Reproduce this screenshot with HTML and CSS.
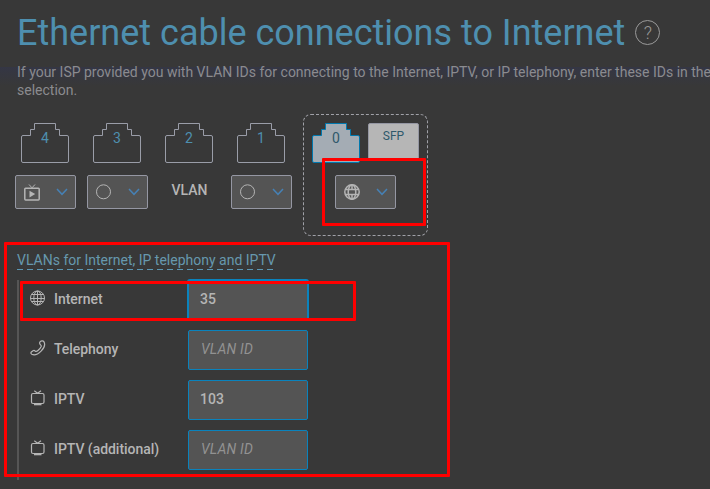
FILE: index.html
```html
<!DOCTYPE html>
<html lang="en">
<head>
    <meta charset="UTF-8">
    <meta name="viewport" content="width=device-width, initial-scale=1.0">
    <title>Ethernet cable connections to Internet</title>

    <link rel="stylesheet" href="styles.css">
</head>
<body>
    <!-- shared icons -->
    <svg class="icon_defs">
        <symbol id="icon_port" viewBox="0 0 48 40">
            <path d="M2 12.5H9.5V6.5H13.5V.5H34.5V6.5H38.5V12.5H46A1.5 1.5 0 0 1 47.5 14V38A1.5 1.5 0 0 1 46 39.5H2A1.5 1.5 0 0 1 .5 38V14A1.5 1.5 0 0 1 2 12.5Z"/>
        </symbol>
        <symbol id="icon_arrow" viewBox="0 0 12 8">
            <path d="M1 1L6 6.3L11 1"/>
        </symbol>
        <symbol id="icon_globe" viewBox="0 0 16 16">
            <circle cx="7.5" cy="8" r="7"/>
            <ellipse cx="7.5" cy="8" rx="3.7" ry="7"/>
            <path d="M7.5 1V15M.5 8.5H14.5M1.8 4.5H13.2M1.8 11.5H13.2"/>
        </symbol>
        <symbol id="icon_tv" viewBox="0 0 16 16">
            <rect x="1.5" y="3.5" width="12.5" height="10" rx="1.5" stroke-width="1.2"/>
            <path d="M4.3 .8L7.6 3.2L11 .8" stroke-width="1.2"/>
            <path d="M4 14.5H11.5" stroke-width="1.6"/>
        </symbol>
    </svg>

    <h1 class="title_page">Ethernet cable connections to Internet
        <span class="btn_help">?</span>
    </h1>
    <p class="text_info">If your ISP provided you with VLAN IDs for connecting to the Internet, IPTV, or IP telephony, enter these IDs in the<br>selection.</p>

    <div class="section_ports">
        <div class="item_port">
            <div class="port"><svg><use href="#icon_port"/></svg><span>4</span></div>
            <div class="select_port">
                <svg class="icon_type" viewBox="0 0 16 17">
                    <rect x=".8" y="4.3" width="14.4" height="11.6" rx=".8" stroke-width="1.5"/>
                    <path d="M5 .5L8 3.8L11 .5"/>
                    <path class="icon_fill" d="M5.5 6.8L11.2 10.1L5.5 13.4Z"/>
                </svg>
                <svg class="icon_arrow"><use href="#icon_arrow"/></svg>
            </div>
        </div>
        <div class="item_port">
            <div class="port"><svg><use href="#icon_port"/></svg><span>3</span></div>
            <div class="select_port">
                <svg class="icon_type" viewBox="0 0 16 17"><circle cx="7.5" cy="7.8" r="7"/></svg>
                <svg class="icon_arrow"><use href="#icon_arrow"/></svg>
            </div>
        </div>
        <div class="item_port">
            <div class="port"><svg><use href="#icon_port"/></svg><span>2</span></div>
            <div class="label_vlan">VLAN</div>
        </div>
        <div class="item_port">
            <div class="port"><svg><use href="#icon_port"/></svg><span>1</span></div>
            <div class="select_port">
                <svg class="icon_type" viewBox="0 0 16 17"><circle cx="7.5" cy="7.8" r="7"/></svg>
                <svg class="icon_arrow"><use href="#icon_arrow"/></svg>
            </div>
        </div>
        <div class="group_wan">
            <div class="row_wan">
                <div class="port port_active"><svg><use href="#icon_port"/></svg><span>0</span></div>
                <div class="port_sfp">SFP</div>
            </div>
            <div class="select_port">
                <svg class="icon_type icon_bold" viewBox="0 0 16 17">
                    <circle cx="8" cy="8" r="7.2"/>
                    <ellipse cx="8" cy="8" rx="3.8" ry="7.2"/>
                    <path d="M8 .8V5.5M8 10.5V15.2M1.3 5.5H14.7M1.3 10.5H14.7"/>
                </svg>
                <svg class="icon_arrow"><use href="#icon_arrow"/></svg>
            </div>
        </div>
    </div>

    <div class="title_vlans">VLANs for Internet, IP telephony and IPTV</div>

    <div class="list_vlans">
        <div class="row_vlan">
            <svg class="icon_row"><use href="#icon_globe"/></svg>
            <label for="vlan_internet">Internet</label>
            <input id="vlan_internet" class="input_focused" type="text" value="35" placeholder="VLAN ID">
        </div>
        <div class="row_vlan">
            <svg class="icon_row" viewBox="0 0 16 16">
                <path stroke-width="1.2" stroke-linejoin="round" d="M10.2 1.6C11.4 .6 13.2 .7 14 1.9C15.3 4.4 13.9 8.3 11.1 11.1C8.3 13.9 4.3 15.5 1.8 14.3C.8 13.7 .6 12.7 1.3 12L3 10.7C3.8 10.2 4.6 10.4 5.2 11.1C6 11.9 7 11.4 8.2 10.3C9.6 9 10.7 7.6 11.2 6.4C11.4 5.8 11.1 5.4 10.6 4.9C9.7 4.1 9.3 2.7 10.2 1.6Z"/>
            </svg>
            <label for="vlan_telephony">Telephony</label>
            <input id="vlan_telephony" type="text" placeholder="VLAN ID">
        </div>
        <div class="row_vlan">
            <svg class="icon_row"><use href="#icon_tv"/></svg>
            <label for="vlan_iptv">IPTV</label>
            <input id="vlan_iptv" type="text" value="103" placeholder="VLAN ID">
        </div>
        <div class="row_vlan">
            <svg class="icon_row"><use href="#icon_tv"/></svg>
            <label for="vlan_iptv_add">IPTV (additional)</label>
            <input id="vlan_iptv_add" type="text" placeholder="VLAN ID">
        </div>
    </div>

    <!-- red highlight frames -->
    <div class="mark mark_select"></div>
    <div class="mark mark_vlans"></div>
    <div class="mark mark_internet"></div>
</body>
</html>
```
FILE: styles.css
```css
* { box-sizing: border-box; }

body 
{
    position: relative;
    height: 489px;
    margin: 0;
    padding: 12px 0 0 15px;
    overflow: hidden;
    font-family: Roboto, sans-serif;
    font-size: 14px;
    color: #b5b5b5;
    background: linear-gradient(rgba(52,54,70,0.9), rgba(56,56,56,0)) 0 67px / 100% 19px no-repeat #383838;
}

svg 
{
    display: block;
    fill: none;
    stroke: #b5b5b5;
}

.icon_defs 
{
    position: absolute;
    width: 0;
    height: 0;
}

.title_page 
{
    display: flex;
    align-items: center;
    gap: 10px;
    height: 41px;
    margin: 0 0 0 2px;
    font-size: 36px;
    font-weight: 400;
    white-space: nowrap;
    color: #4e8faf;
}

.btn_help 
{
    width: 25px;
    height: 25px;
    margin-top: -1px;
    border: 1px solid #9a9a9a;
    border-radius: 50%;
    font-size: 18px;
    font-weight: 300;
    line-height: 24px;
    text-align: center;
    color: #9a9a9a;
}

.text_info 
{
    margin: 10px 0 0 2px;
    line-height: 18px;
    white-space: nowrap;
    color: #8b8b8f;
}

/* ports */
.section_ports 
{
    display: flex;
    gap: 11px;
    margin-top: 15px;
}

.item_port 
{
    width: 61px;
    padding-top: 9px;
}

.port 
{
    display: grid;
    width: 48px;
    height: 40px;
    margin-left: 6px;
    text-align: center;
    color: #4e8faf;
}

.port svg, .port span { grid-area: 1 / 1; }
.port span { line-height: 31px; }

.port svg 
{
    width: 48px;
    height: 40px;
    stroke: #9a9da8;
}

.select_port 
{
    display: flex;
    align-items: center;
    justify-content: space-between;
    width: 61px;
    height: 34px;
    margin-top: 12px;
    padding: 0 7px 0 8px;
    border: 1px solid #9597a3;
    border-radius: 2px;
    background-color: #545454;
}

.icon_type 
{
    width: 16px;
    height: 17px;
}

.icon_bold { stroke-width: 1.5; }
.icon_fill { fill: #b5b5b5; stroke: none; }

.icon_arrow 
{
    width: 12px;
    height: 8px;
    margin-bottom: 1px;
    stroke: #4681b5;
    stroke-width: 1.5;
}

.label_vlan 
{
    margin-top: 12px;
    font-weight: 500;
    line-height: 31px;
    text-align: center;
}

.group_wan 
{
    width: 125px;
    height: 122px;
    padding: 8px;
    border: 1px dashed #a0a1a8;
    border-radius: 8px;
}

.row_wan 
{
    display: flex;
    gap: 8px;
}

.group_wan .port { margin-left: 0; }
.group_wan .select_port { margin-left: 23px; }

.port_active { color: #2f596b; }
.port_active svg { fill: #a4acb4; stroke: #0078ae; }

.port_sfp 
{
    width: 51px;
    height: 38px;
    border: 1px solid #9597a3;
    border-radius: 2px;
    font-size: 12px;
    line-height: 24px;
    text-align: center;
    color: #2f596b;
    background-color: #b6b6b6;
}

/* vlan list */
.title_vlans 
{
    width: 259px;
    height: 20px;
    margin: 14px 0 0 2px;
    line-height: 20px;
    white-space: nowrap;
    color: #6798ae;
    background: repeating-linear-gradient(90deg, #5b97b3 0 6px, transparent 6px 10px) bottom / 100% 1px no-repeat;
}

.list_vlans 
{
    display: flex;
    flex-direction: column;
    gap: 10px;
    height: 200px;
    margin: 10px 0 0 2px;
    border-left: 2px solid #565656;
}

.row_vlan 
{
    display: flex;
    align-items: center;
    height: 40px;
    padding-left: 11px;
}

.icon_row 
{
    width: 16px;
    height: 16px;
    margin-top: -4px;
}

.row_vlan label 
{
    width: 134px;
    margin: -2px 0 0 8px;
    font-weight: 500;
    letter-spacing: -0.04px;
}

.row_vlan input 
{
    width: 120px;
    height: 40px;
    padding: 0 11px 2px;
    border: 1px solid #0a83bd;
    border-radius: 2px;
    outline: none;
    font: 500 14px Roboto, sans-serif;
    color: #b5b5b5;
    background-color: #545454;
}

.row_vlan input::placeholder 
{
    font-style: italic;
    font-weight: 400;
    letter-spacing: 0.2px;
    text-indent: 1px;
    color: #929292;
}

.row_vlan .input_focused { box-shadow: 0 0 0 1px #0a83bd; }

/* highlight frames */
.mark 
{
    position: absolute;
    border: 3px solid #ff0000;
    border-radius: 1px;
    pointer-events: none;
}

.mark_select 
{
    left: 322px;
    top: 158px;
    width: 104px;
    height: 68px;
}

.mark_vlans 
{
    left: 4px;
    top: 242px;
    width: 446px;
    height: 235px;
}

.mark_internet 
{
    left: 20px;
    top: 281px;
    width: 336px;
    height: 40px;
}
```
